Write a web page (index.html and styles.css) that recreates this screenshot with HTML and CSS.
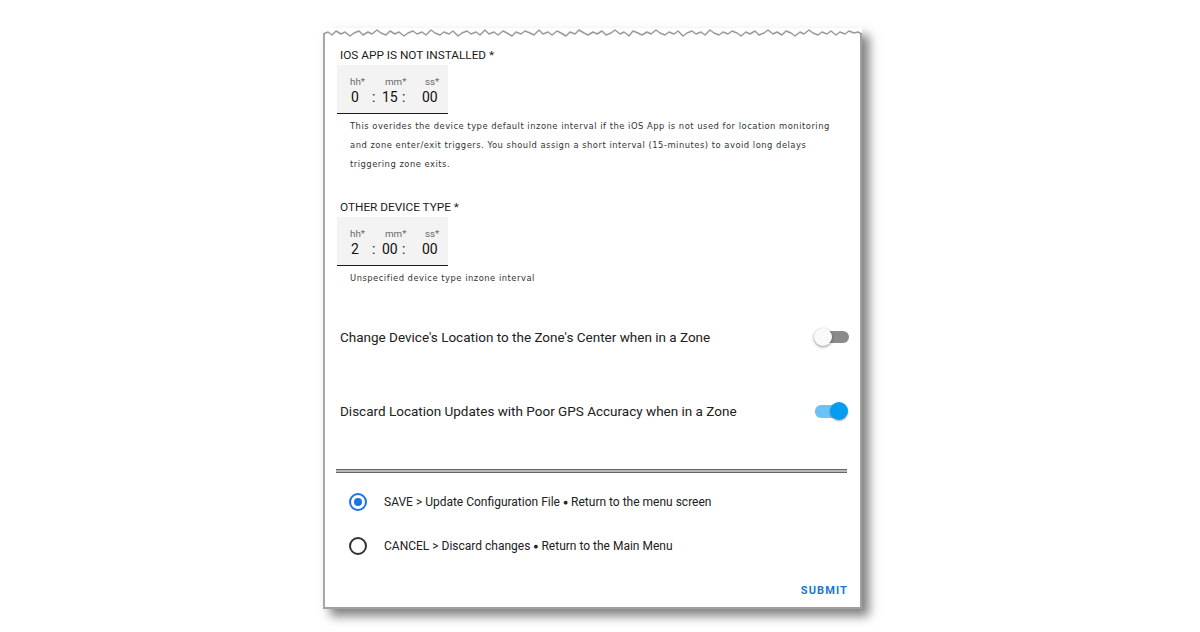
FILE: index.html
```html
<!DOCTYPE html>
<html>
<head>
<meta charset="utf-8">
<link rel="stylesheet" href="styles.css">
</head>
<body>
<div class="card">
  <svg class="tear" viewBox="0 0 539 12" width="539" height="12">
    <path d="M0,6 L5,4 9,7 13,3 18,6 22,4 27,8 31,5 36,3 40,7 45,4 49,6 54,2 58,5 63,7 67,3 72,6 76,4 81,8 85,5 90,3 94,6 99,4 103,7 108,2 112,5 117,7 121,4 126,6 130,3 135,8 139,5 144,3 148,6 153,4 157,7 162,2 166,6 171,4 175,7 180,3 184,5 189,8 193,4 198,6 202,3 207,5 211,7 216,2 220,6 225,4 229,7 234,3 238,5 243,8 247,4 252,6 256,2 261,5 265,7 270,4 274,6 279,3 283,7 288,5 292,2 297,6 301,4 306,8 310,3 315,5 319,7 324,4 328,6 333,2 337,5 342,7 346,4 351,6 355,3 360,8 364,5 369,3 373,6 378,4 382,7 387,2 391,5 396,7 400,4 405,6 409,3 414,5 418,8 423,4 427,6 432,3 436,7 441,5 445,2 450,6 454,4 459,7 463,3 468,5 472,8 477,4 481,6 486,2 490,5 495,7 499,4 504,6 508,3 513,7 517,4 522,6 526,3 531,5 535,4 539,6 L539,12 L0,12 Z" fill="#fff"/>
    <polyline points="0,6 5,4 9,7 13,3 18,6 22,4 27,8 31,5 36,3 40,7 45,4 49,6 54,2 58,5 63,7 67,3 72,6 76,4 81,8 85,5 90,3 94,6 99,4 103,7 108,2 112,5 117,7 121,4 126,6 130,3 135,8 139,5 144,3 148,6 153,4 157,7 162,2 166,6 171,4 175,7 180,3 184,5 189,8 193,4 198,6 202,3 207,5 211,7 216,2 220,6 225,4 229,7 234,3 238,5 243,8 247,4 252,6 256,2 261,5 265,7 270,4 274,6 279,3 283,7 288,5 292,2 297,6 301,4 306,8 310,3 315,5 319,7 324,4 328,6 333,2 337,5 342,7 346,4 351,6 355,3 360,8 364,5 369,3 373,6 378,4 382,7 387,2 391,5 396,7 400,4 405,6 409,3 414,5 418,8 423,4 427,6 432,3 436,7 441,5 445,2 450,6 454,4 459,7 463,3 468,5 472,8 477,4 481,6 486,2 490,5 495,7 499,4 504,6 508,3 513,7 517,4 522,6 526,3 531,5 535,4 539,6" fill="none" stroke="#9a9a9a" stroke-width="1.5" stroke-linejoin="round"/>
    <line x1="1" y1="6" x2="1" y2="12" stroke="#a8a8a8" stroke-width="2"/>
    <line x1="538" y1="6" x2="538" y2="12" stroke="#a0a0a0" stroke-width="2"/>
  </svg>
  <div class="body">
    <div class="heading first">IOS APP IS NOT INSTALLED *</div>
    <div class="timebox">
      <div class="labels"><span class="l1">hh*</span><span class="l2">mm*</span><span>ss*</span></div>
      <div class="values"><span class="v1">0</span><span class="c">:</span><span class="v2">15</span><span class="c2">:</span><span>00</span></div>
    </div>
    <div class="help">This overides the device type default inzone interval if the iOS App is not used for location monitoring<br>and zone enter/exit triggers. You should assign a short interval (15-minutes) to avoid long delays<br>triggering zone exits.</div>

    <div class="heading second">OTHER DEVICE TYPE *</div>
    <div class="timebox">
      <div class="labels"><span class="l1">hh*</span><span class="l2">mm*</span><span>ss*</span></div>
      <div class="values"><span class="v1">2</span><span class="c">:</span><span class="v2">00</span><span class="c2">:</span><span>00</span></div>
    </div>
    <div class="help">Unspecified device type inzone interval</div>

    <div class="toggle-row row1">
      <span>Change Device's Location to the Zone's Center when in a Zone</span>
      <span class="switch off"><span class="track"></span><span class="knob"></span></span>
    </div>
    <div class="toggle-row row2">
      <span>Discard Location Updates with Poor GPS Accuracy when in a Zone</span>
      <span class="switch on"><span class="track"></span><span class="knob"></span></span>
    </div>

    <div class="sep"></div>

    <div class="radio-row r1"><span class="radio checked"></span><span>SAVE &gt; Update Configuration File <span class="dot">●</span> Return to the menu screen</span></div>
    <div class="radio-row r2"><span class="radio"></span><span>CANCEL &gt; Discard changes <span class="dot">●</span> Return to the Main Menu</span></div>

    <div class="actions"><span class="submit">SUBMIT</span></div>
  </div>
</div>
</body>
</html>
```

FILE: styles.css
```css
html, body { margin: 0; padding: 0; background: #fff; }
body { font-family: Roboto, "Liberation Sans", sans-serif; color: #212121; min-height: 632px; padding-top: 28px; box-sizing: border-box; }

.card {
  width: 539px;
  margin: 0 0 0 323px;
  box-sizing: border-box;
  box-shadow: 7px 7px 10px rgba(0,0,0,0.5);
}
.tear { display: block; }
.body {
  border-left: 2px solid #a8a8a8;
  border-right: 2px solid #a0a0a0;
  border-bottom: 2px solid #a0a0a0;
  background: #fff;
  padding: 0 10px 8px 15px;
}

.heading { font-size: 11.8px; line-height: 16px; font-weight: 400; color: #1a1a1a; }
.heading.first { padding-top: 7px; }
.heading.second { margin-top: 25px; }

.timebox {
  margin: 2px 0 0 -3px;
  width: 111px;
  background: #f3f3f3;
  border-bottom: 1px solid #1a1a1a;
  padding: 11px 0 7px 13px;
  box-sizing: border-box;
}
.labels { display: flex; font-size: 9.8px; line-height: 12px; color: #6a6a6a; }
.labels .l1 { width: 35px; }
.labels .l2 { width: 40px; }
.values { display: flex; font-size: 14px; line-height: 18px; color: #111; padding-left: 1px; }
.values .v1 { width: 21px; }
.values .c { width: 10px; }
.values .v2 { width: 20px; }
.values .c2 { width: 20px; }

.help {
  margin-top: 3px;
  padding-left: 10px;
  font-family: "DejaVu Sans", Verdana, sans-serif;
  font-size: 8.4px;
  letter-spacing: 0.5px;
  line-height: 19px;
  color: #333;
}

.toggle-row {
  display: flex;
  align-items: center;
  justify-content: space-between;
  height: 40px;
  font-size: 13.5px;
  color: #212121;
}
.toggle-row.row1 { margin-top: 29px; }
.toggle-row.row2 { margin-top: 34px; }

.switch { position: relative; width: 36px; height: 20px; }
.switch .track { position: absolute; top: 4px; height: 12px; border-radius: 6px; }
.switch .knob { position: absolute; top: 1px; width: 18px; height: 18px; border-radius: 50%; }
.switch.off .track { left: 5px; width: 30px; background: #8a8a8a; }
.switch.off .knob { left: 0; background: #fafafa; box-shadow: 0 1px 3px rgba(0,0,0,0.45); }
.switch.on .track { left: 1px; width: 31px; height: 13px; background: #6cc2f6; }
.switch.on .knob { left: 16px; background: #059df0; box-shadow: 0 1px 2px rgba(0,0,0,0.35); }

.sep {
  margin: 38px 3px 0 -4px;
  height: 2px;
  background: #b8b8b8;
  border-top: 1px solid #666;
  border-bottom: 1px solid #666;
}

.radio-row {
  display: flex;
  align-items: center;
  height: 30px;
  font-size: 12px;
  color: #212121;
}
.radio-row .dot { font-size: 8.5px; vertical-align: 1px; }
.radio-row.r1 { margin-top: 14px; }
.radio-row.r2 { margin-top: 14px; }
.radio {
  width: 18px; height: 18px;
  box-sizing: border-box;
  border: 2px solid #333;
  border-radius: 50%;
  margin: 0 17px 0 9px;
  display: flex; align-items: center; justify-content: center;
}
.radio.checked { border-color: #1a73e8; }
.radio.checked::after {
  content: "";
  width: 8px; height: 8px; border-radius: 50%;
  background: #1a73e8;
}

.actions { display: flex; justify-content: flex-end; margin-top: 22px; padding-right: 2px; }
.submit {
  font-size: 11px; line-height: 16px; font-weight: 700;
  letter-spacing: 1.1px; color: #1677d6;
}
```
